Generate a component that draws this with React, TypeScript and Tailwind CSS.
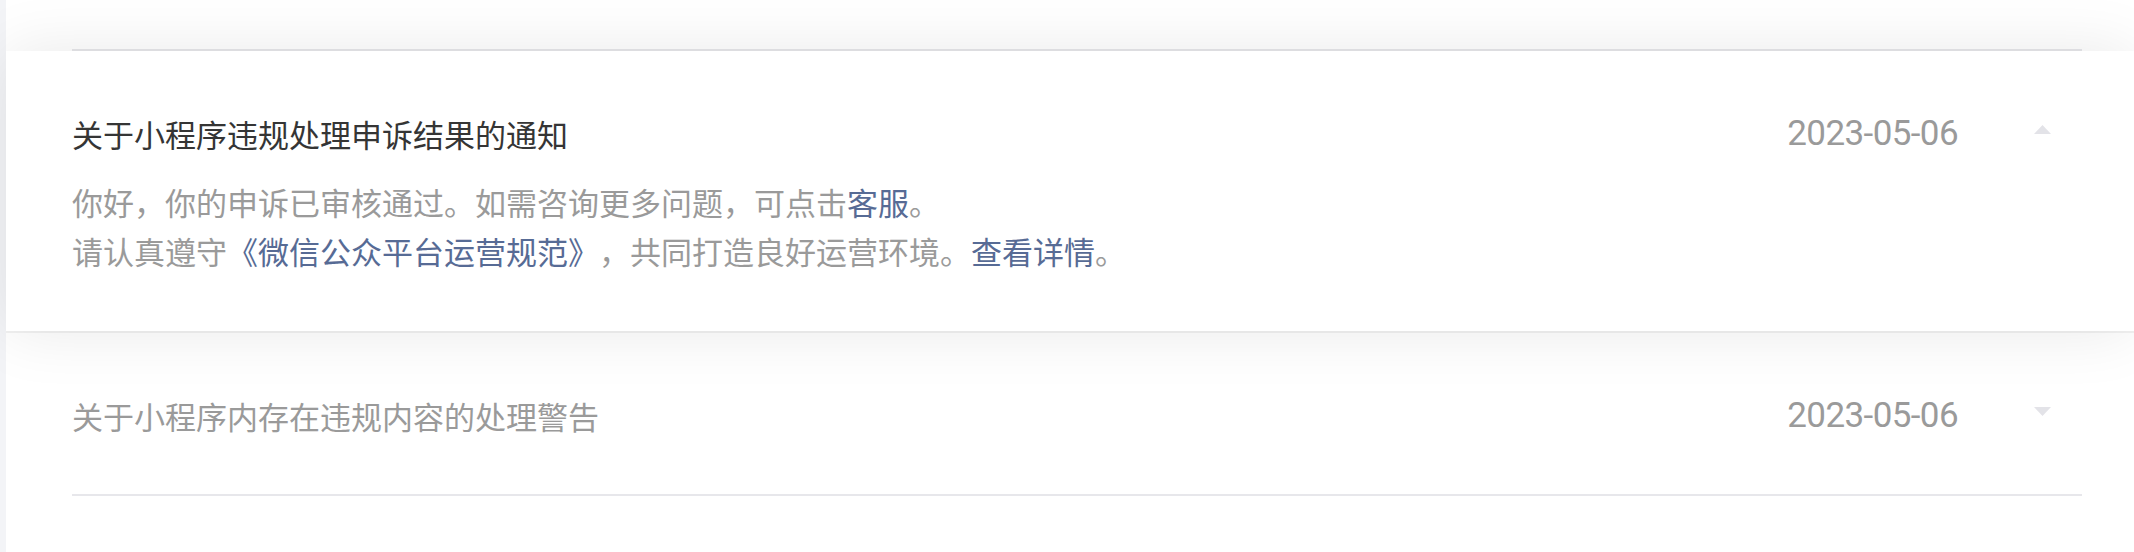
import React from "react";

const cjk = { fontFamily: '"Noto Sans CJK SC", "Noto Sans", sans-serif' };
const num = { fontFamily: 'Roboto, "Noto Sans", sans-serif' };

function Triangle({ up }: { up: boolean }) {
  return (
    <svg width="17" height="9" viewBox="0 0 17 9" className="block">
      {up ? (
        <polygon points="8.5,0 17,9 0,9" fill="#e3e3e8" />
      ) : (
        <polygon points="0,0 17,0 8.5,9" fill="#e3e3e8" />
      )}
    </svg>
  );
}

function Row({
  title,
  date,
  dark,
  up,
}: {
  title: string;
  date: string;
  dark: boolean;
  up: boolean;
}) {
  return (
    <div className="flex items-center h-[44px]">
      <div
        className={`flex-1 text-[31px] leading-[44px] whitespace-nowrap [text-spacing-trim:space-all] ${
          dark ? "text-[#353535]" : "text-[#9a9a9a]"
        }`}
        style={cjk}
      >
        {title}
      </div>
      <div
        className="text-[35px] leading-[44px] text-[#9a9a9a] tracking-[-0.6px]"
        style={num}
      >
        {date}
      </div>
      <div className="ml-[76px] mr-[31px] mb-[10px] w-[17px]">
        <Triangle up={up} />
      </div>
    </div>
  );
}

export default function App() {
  return (
    <div className="w-full h-[552px] bg-[#f3f4f7] pl-[6px] overflow-hidden">
      <div className="bg-white h-full flex flex-col">
        <div className="h-[51px] shrink-0 pl-[66px] pr-[52px]">
          <div className="h-full border-b-2 border-[#e7e7eb]" />
        </div>
        <div className="relative z-10 bg-white shrink-0 pl-[66px] pr-[52px] pt-[61px] pb-[56px] shadow-[0_2px_0_rgba(0,0,0,0.05),0_0_60px_rgba(0,0,0,0.09)]">
          <Row
            title="关于小程序违规处理申诉结果的通知"
            date="2023-05-06"
            dark
            up
          />
          <div
            className="mt-[21px] text-[31px] leading-[49px] text-[#9a9a9a] whitespace-nowrap [text-spacing-trim:space-all]"
            style={cjk}
          >
            <div>
              你好，你的申诉已审核通过。如需咨询更多问题，可点击
              <span className="text-[#576b95]">客服</span>。
            </div>
            <div>
              请认真遵守
              <span className="text-[#576b95]">《微信公众平台运营规范》</span>
              ，共同打造良好运营环境。
              <span className="text-[#576b95]">查看详情</span>。
            </div>
          </div>
        </div>
        <div className="shrink-0 pl-[66px] pr-[52px]">
          <div className="pt-[63px] pb-[56px] border-b-2 border-[#e7e7eb]">
            <Row
              title="关于小程序内存在违规内容的处理警告"
              date="2023-05-06"
              dark={false}
              up={false}
            />
          </div>
        </div>
      </div>
    </div>
  );
}
